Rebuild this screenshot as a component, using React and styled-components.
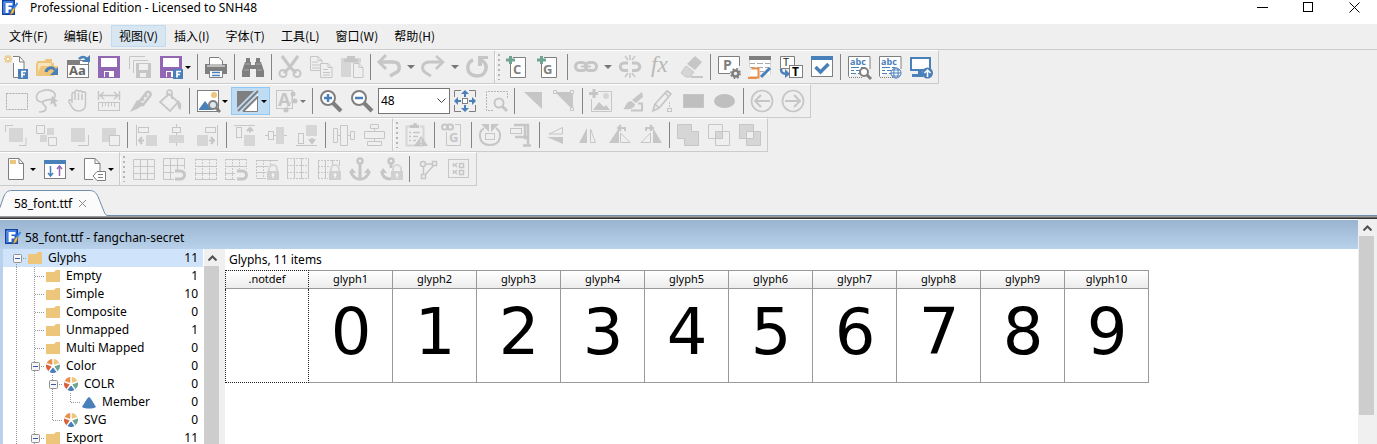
import React from 'react';
import styled, { createGlobalStyle, css } from 'styled-components';

const G = '#c6c6c6';
const L = '#d6d6d6';
const D = '#7f7f7f';
const B = '#4a80ba';
const O = '#edc57b';
const P = '#9166b5';
const T = '#6fa392';
const W = '#ffffff';

const Global = createGlobalStyle`
  * { box-sizing: border-box; }
  html, body { margin: 0; }
  body {
    font-family: "Noto Sans", "Noto Sans CJK SC", sans-serif;
    font-size: 12px;
    line-height: 18px;
    color: #000;
    background: #efefef;
  }
  button { font: inherit; color: inherit; border: 0; background: none; padding: 0; margin: 0; }
`;

const Window = styled.div`
  display: flex;
  flex-direction: column;
  height: 100vh;
  overflow: hidden;
`;
const TitleBar = styled.header`
  display: flex;
  align-items: flex-start;
  height: 24px;
  background: #fff;
  padding-left: 2px;
`;
const TitleText = styled.div`
  flex: 1;
  line-height: 16px;
  padding-left: 12px;
  white-space: nowrap;
`;
const WindowButton = styled.button`
  width: 46px;
  height: 14px;
  display: flex;
  justify-content: center;
`;
const MenuBar = styled.nav`
  display: flex;
  height: 26px;
  padding: 1px 0 2px 1px;
  border-bottom: 1px solid #cbcbcb;
`;
const MenuItem = styled.button`
  padding: 0 7px;
  border: 1px solid ${(p) => (p.$active ? '#c0dcf3' : 'transparent')};
  background: ${(p) => (p.$active ? '#d8e6f2' : 'transparent')};
  font-family: "Noto Sans CJK SC", sans-serif;
  white-space: nowrap;
`;
const ToolRow = styled.div`
  display: flex;
`;
const Toolbar = styled.div`
  display: flex;
  align-items: center;
  height: 34px;
  padding-right: 2px;
  border-top: 1px solid #fff;
  border-right: 1px solid #cbcbcb;
  border-bottom: 1px solid #cbcbcb;
`;
const Grip = styled.i`
  width: 7px;
  height: 26px;
  border-left: 1px solid #fff;
  background: repeating-linear-gradient(#b5b5b5 0 2px, transparent 2px 5px) 2px 0 / 2px 100% no-repeat;
`;
const ToolButton = styled.button`
  display: flex;
  align-items: center;
  width: ${(p) => (p.$drop === 'wide' ? 44 : p.$drop ? 39 : 31)}px;
  height: 28px;
  padding-left: 4px;
  gap: ${(p) => (p.$drop === 'wide' ? 6 : 2)}px;
  flex: none;
  svg { overflow: visible; }
  ${(p) => p.$active && css`
    background: #c0dcf3;
    box-shadow: inset 0 0 0 1px #90c8f6;
  `}
`;
const Caret = styled.i`
  border: solid transparent;
  border-width: ${(p) => (p.$wide ? '4px 4px 0' : '3px 3px 0')};
  border-top-color: ${(p) => p.$color};
`;
const Separator = styled.i`
  width: 1px;
  height: 26px;
  margin: 0 2px 0 3px;
  background: #858585;
`;
const ZoomBox = styled.label`
  display: flex;
  align-items: center;
  height: 26px;
  width: 72px;
  margin: 0 -1px 0 1px;
  position: relative;
  svg { position: absolute; right: 4px; pointer-events: none; }
`;
const ZoomSelect = styled.select`
  appearance: none;
  width: 100%;
  height: 100%;
  border: 1px solid #777;
  border-radius: 0;
  background: #fff;
  color: #000;
  font: 12px "Noto Sans", sans-serif;
  padding: 0 2px 2px;
`;
const TabStrip = styled.div`
  display: flex;
  flex: none;
  height: 33px;
  padding-top: 4px;
  background: linear-gradient(#6e8dab, #6e8dab) 0 29px / 100% 1px no-repeat,
    linear-gradient(#9d9d9d, #9d9d9d) 0 30px / 100% 1px no-repeat,
    linear-gradient(#696969, #696969) 0 31px / 100% 1px no-repeat,
    linear-gradient(#303438, #303438) 0 32px / 100% 1px no-repeat;
`;
const Tab = styled.div`
  position: relative;
  display: flex;
  align-items: center;
  gap: 6px;
  width: 108px;
  height: 26px;
  padding: 2px 0 0 14px;
`;
const TabShape = styled.svg`
  position: absolute;
  inset: 0;
`;
const TabLabel = styled.button`
  position: relative;
  white-space: nowrap;
`;
const Workspace = styled.main`
  display: flex;
  flex: 1;
  min-height: 0;
  padding: 0 2px 0 0;
`;
const Document = styled.section`
  display: flex;
  flex-direction: column;
  flex: 1;
  min-width: 0;
  margin-right: 1px;
  background: #b9d1ea;
  border-top: 1px solid #fff;
`;
const DocTitle = styled.div`
  display: flex;
  align-items: flex-end;
  flex: none;
  gap: 4px;
  height: 29px;
  padding: 0 0 2px 5px;
  background: linear-gradient(#99b4d1, #b9d1ea);
  svg { margin-bottom: 2px; }
`;
const DocBody = styled.div`
  display: flex;
  flex: 1;
  min-height: 0;
  margin-left: 3px;
  background: #fff;
`;
const Tree = styled.ul`
  width: 201px;
  flex: none;
  margin: 0;
  padding: 0 1px 0 0;
  list-style: none;
  overflow: hidden;
`;
const TreeRow = styled.li`
  display: flex;
  align-items: center;
  height: 18px;
  padding: 0 5px;
  background: ${(p) => (p.$selected ? '#cfe4fb' : 'transparent')};
  white-space: nowrap;
  svg { flex: none; }
`;
const TreeIcon = styled.span`
  display: flex;
  width: 22px;
  padding-left: 2px;
`;
const Count = styled.span`
  margin-left: auto;
`;
const ScrollTrack = styled.div`
  display: flex;
  flex-direction: column;
  flex: none;
  width: 16px;
  background: #f0f0f0;
`;
const ScrollArrow = styled.button`
  display: flex;
  align-items: center;
  justify-content: center;
  flex: none;
  height: 17px;
`;
const ScrollRail = styled.div`
  flex: 1;
`;
const Thumb = styled.div`
  height: ${(p) => p.$size};
  margin-right: 1px;
  background: #cdcdcd;
`;
const Splitter = styled.div`
  width: 5px;
  flex: none;
  background: #f0f0f0;
`;
const GlyphPane = styled.div`
  flex: 1;
  min-width: 0;
  overflow: hidden;
`;
const PaneHeading = styled.h1`
  margin: 0;
  padding: 2px 0 1px 4px;
  font-size: 12px;
  font-weight: 400;
  line-height: 18px;
`;
const GlyphTable = styled.table`
  table-layout: fixed;
  width: 924px;
  border-spacing: 0;
  text-align: center;
`;
const edge = css`
  padding: 0;
  border: solid #999;
  border-width: 0 1px 1px 0;
`;
const GlyphName = styled.th`
  ${edge}
  height: 19px;
  border-top-width: 1px;
  padding-bottom: 2px;
  font-size: 11px;
  line-height: 15px;
  font-weight: 400;
  background: linear-gradient(#fff, #ececec);
  ${(p) => p.$current && css`
    border-width: 1px;
    border-style: dotted dotted solid;
    border-color: #222 #222 #999;
  `}
`;
const GlyphCell = styled.td`
  ${edge}
  height: 94px;
  padding: 0 0 8px 1px;
  font-family: "DejaVu Sans", sans-serif;
  font-size: 64px;
  line-height: 80px;
  ${(p) => p.$current && css`
    border: 1px dotted #222;
    border-top: 0;
  `}
`;

const Letter = ({ x, y, s = 10, c = D, w = 700, f = 'Open Sans', i, children }) => (
  <text x={x} y={y} fontSize={s} fill={c} fontWeight={w} fontStyle={i ? 'italic' : 'normal'} fontFamily={`"${f}", sans-serif`} stroke="none">{children}</text>
);
const FBadge = () => (
  <g><rect x="14" y="14" width="10" height="10" fill={B} /><path d="M18 22.500v-6h4M18 19.500h3" stroke={W} strokeWidth="1.700" /></g>
);
const Lock = () => (
  <g><path d="M14 15v-3a4 4 0 0 1 8 0v3" stroke={L} strokeWidth="2" /><rect x="12" y="14" width="12" height="9" fill="#d0d0d0" /><path d="M18 16v5M16.500 18h3" stroke={W} /></g>
);
const Magnet = () => <path d="M13 14h5.500a3.500 3.500 0 0 1 0 8H13" stroke={G} strokeWidth="3" />;
const Floppy = ({ c }) => (
  <g><path fillRule="evenodd" fill={c} d="M1 1h22v22H1zM4 3v9h16V3zM7 16v6h10v-6z" /><path d="M8 17h4v5H8z" fill={c} /></g>
);
const Globe = ({ x, y }) => (
  <g transform={`translate(${x} ${y})`} stroke={B} fill={W}><circle r="5" /><ellipse rx="2.200" ry="5" /><path d="M-5 0H5M-4-3h8M-4 3h8" /></g>
);
const AbcPage = () => (
  <g><path d="M23 14V1.500H1.500v20" stroke={D} fill={W} /><path d="M2 22.500h14" stroke={D} strokeDasharray="1 1" /><Letter x="3" y="10" s="9" c={B}>abc</Letter><path d="M4 12.500h8m2 0h3M4 15.500h3m2 0h4M4 18.500h5m2 0h2" stroke={B} /></g>
);

const icons = {
  newDoc: <><path d="M9.500 8v14.500H20V6.500L15.500 1.500H9" stroke={D} fill={W} /><path d="M15.500 2v5H20" stroke={D} /><path d="M4 0v8M0 4h8M1 1l6 6M7 1L1 7" stroke={O} strokeWidth="1.500" /><circle cx="4" cy="4" r="1.300" fill={W} /><FBadge /></>,
  open: <><path d="M1 21V8h1V6h7l2-2h6v4h2v3H6z" fill={O} /><path d="M3 8h13v3H6l-3 6z" fill="#f7e3bc" /><path d="M6 11h17l-4 10H1z" fill={O} /><path d="M11 17a5 5 0 0 1 9-2" stroke={B} strokeWidth="3" /><path d="M15 20h8v-8z" fill={B} /></>,
  rename: <><rect x="1.500" y="5.500" width="21" height="17" stroke={D} fill={W} /><path d="M1 5h13v4h9v1H1z" fill={D} /><Letter x="3" y="20" s="13" c="#666">Aa</Letter><path d="M13 4a5 5 0 0 1 8 0" stroke={B} strokeWidth="2.500" /><path d="M24 0v7h-8z" fill={B} /></>,
  save: <><path d="M4 2h16v11H4zM7 16h11v6H7z" fill={W} /><Floppy c={P} /></>,
  saveAll: <><path d="M1.500 14V1.500H17M5.500 18V5.500H20" stroke={G} /><path fillRule="evenodd" fill={G} d="M8 8h15v15H8zM11 9v6h9V9zM12 18v4h6v-4z" /></>,
  saveF: <><path d="M4 2h16v11H4zM7 16h11v6H7z" fill={W} /><Floppy c={P} /><FBadge /></>,
  print: <><path d="M1 9h22v10H1z" fill={D} /><path d="M5.500 10V2.500H15l3.500 3.500v4z" stroke={D} fill={W} /><path d="M3 11h18" stroke={W} /><path d="M5.500 15.500h13v7h-13z" stroke={D} fill={W} /><path d="M8 17.500h8M8 20.500h8" stroke={B} strokeWidth="1.500" /></>,
  find: <><path d="M5 3h4v4h1v3h4V7h1V3h4v4h1l3 9v6h-8v-8h-6v8H1v-6l3-9h1z" fill={D} /><path d="M4 9h5M15 9h5M3 15h5M16 15h5" stroke="#aaa" /></>,
  cut: <><path d="M4 1l8 11 8-11M12 12l-6 6M12 12l6 6" stroke={G} strokeWidth="3" /><circle cx="5" cy="18.500" r="3.500" stroke={G} strokeWidth="2" /><circle cx="19" cy="18.500" r="3.500" stroke={G} strokeWidth="2" /></>,
  copy: <><path d="M1.500 1.500H9l4 4v10H1.500zM9 1.500v4h4" stroke={G} /><path d="M3 7h6M3 10h8M3 13h8" stroke={G} /><path d="M11.500 8.500H19l4 4v10H11.500z" stroke={G} fill="#efefef" /><path d="M19 8.500v4h4M14 14.500h5M14 17.500h7M14 20h7" stroke={G} /></>,
  paste: <><path d="M1 3h20v5H11v14H1z" fill={L} /><path d="M7 4V1h8v3h3v3H4V4z" fill={G} /><path d="M13.500 8.500H19l4 4v10h-9.500zM19 8.500v4h4" stroke={G} fill="#efefef" /></>,
  undo: <><path d="M3 7h13c8 0 8 9 2 11l-5 3" stroke={G} strokeWidth="3.500" /><path d="M9 0L2 7l7 7" stroke={G} strokeWidth="3" /></>,
  redo: <><path d="M21 7H9C0 7 0 15 5 18l5 3" stroke={G} strokeWidth="3" /><path d="M15 1l7 6-7 7" stroke={G} strokeWidth="2.500" /></>,
  repeat: <><path d="M16 5c9 5 5 16-4 16C1 21 0 8 8 5" stroke={G} strokeWidth="3.500" /><path d="M13 1h10v3h-6v7h-4z" fill={G} /></>,
  addC: <><path d="M7 2.500h12.500v20h-15V9" stroke={D} fill={W} /><path d="M4.500 1v8M0 5h9" stroke={T} strokeWidth="3" /><Letter x="7" y="19" s="13">C</Letter></>,
  addG: <><path d="M7 2.500h12.500v20h-15V9" stroke={D} fill={W} /><path d="M4.500 1v8M0 5h9" stroke={T} strokeWidth="3" /><Letter x="6" y="19" s="13">G</Letter></>,
  link: <g stroke={G} strokeWidth="3"><rect x="1.500" y="7.500" width="11" height="8" rx="4" /><rect x="11.500" y="7.500" width="11" height="8" rx="4" /><path d="M7 11.500h10" strokeWidth="2" /></g>,
  unlink: <g stroke={G} strokeWidth="3"><path d="M10 8H6a3.700 3.700 0 0 0 0 7.500h4M14 8h4a3.700 3.700 0 0 1 0 7.500h-4" /><path d="M12 0v5M7 1l3 4M17 1l-3 4M12 18v5M7 22l3-4M17 22l-3-4" strokeWidth="1.500" /></g>,
  fx: <Letter x="2" y="17" s="23" c="#b8b8b8" f="Liberation Serif" w={400} i>fx</Letter>,
  eraser: <><path d="M15 1l7 6-7 8-8-6z" fill={G} /><path d="M6 11l8 6-4 5H6l-5-4z" fill={L} stroke={G} /><path d="M11 22h12" stroke={G} strokeWidth="2" /></>,
  params: <><path d="M22.500 11V1.500h-21v17H13" stroke={D} fill={W} /><Letter x="6" y="15" s="14">P</Letter><circle cx="18.500" cy="18.500" r="3" stroke={D} strokeWidth="2.500" /><circle cx="18.500" cy="18.500" r="4.700" stroke={D} strokeWidth="1.500" strokeDasharray="1.900 1.800" /></>,
  tableEdit: <><path d="M1.500 12V1.500h21V20" fill={W} stroke={L} /><path d="M1 1h22v4H1z" fill={D} /><path d="M2 8.500h5m2 0h6m2 0h5M2 12.500h5m2 0h6m2 0h4M12 16.500h4" stroke="#aaa" /><path d="M3.500 13.500h7v9h-9" fill={W} stroke="#e8904b" strokeWidth="2" /><path d="M0 23h9" stroke="#e8904b" strokeWidth="2" /><path d="M13 22l9-9" stroke={B} strokeWidth="3" /></>,
  transform: <><path d="M1.500 1.500h14v12h-14z" fill={W} stroke={D} /><Letter x="4" y="11" s="11" c="#222" w={400}>T</Letter><rect x="10.500" y="10.500" width="13" height="12" fill={W} stroke={D} /><Letter x="13" y="21" s="12" c="#000">T</Letter><path d="M2 14c0 4 2 5 6 5" stroke={B} strokeWidth="2.500" /><path d="M6 14l5 5-5 4z" fill={B} /></>,
  validate: <><rect x="1.500" y="1.500" width="21" height="20" fill={W} stroke={D} /><path d="M1 1h22v4H1z" fill={B} /><path d="M5.500 12l5 5 8-8" stroke={B} strokeWidth="3.500" /></>,
  abcFind: <><AbcPage /><circle cx="17" cy="17" r="4" stroke={D} strokeWidth="2" fill={W} /><path d="M20 20l4 4" stroke={D} strokeWidth="3" /></>,
  abcWeb: <><AbcPage /><Globe x={18} y={18} /></>,
  upload: <><rect x="2" y="3" width="19" height="12" stroke={B} strokeWidth="2" fill={W} /><path d="M9 16h4v3H9zM3 19h11v3H3z" fill={B} /><circle cx="18.500" cy="18" r="5.500" fill={B} /><path d="M18.500 22v-7M15.500 18l3-3 3 3" stroke={W} strokeWidth="1.500" /></>,

  rectSel: <rect x="2.500" y="4.500" width="21" height="16" stroke="#aaa" strokeDasharray="2 1" />,
  lasso: <><path d="M8 13C-1 13 0 4 7 2c7-3 14 1 13 5-1 5-8 3-11 5-4 3 2 4 2 7s-3 4-7 4" stroke={G} strokeWidth="1.700" /><path d="M17 7l6 5-3 1 2 4-2 1-2-4-3 2z" fill={G} /></>,
  hand: <path d="M6 14V5a1.500 1.500 0 0 1 3 0V3a1.500 1.500 0 0 1 3.500 0 1.500 1.500 0 0 1 3.500 1 1.500 1.500 0 0 1 3.500 1.500V15c0 5-3 7-7 7-5 0-6-3-9-8-1-2-1-5 2.500-2M9 5v6M12.500 4v7M16 5v6" stroke={G} strokeWidth="1.500" />,
  measure: <><path d="M1.500 2v9M22.500 2v9M3 6.500h18M7 3L3 6.500 7 10M17 3l4 3.500L17 10" stroke={G} strokeWidth="1.500" /><rect x="1.500" y="13.500" width="21" height="8" stroke={G} /><path d="M5.500 14v4M8.500 14v3M11.500 14v4M14.500 14v3M17.500 14v4" stroke={G} /></>,
  knife: <><path d="M11 13l7-9c2-3 6 0 4 3l-7 9z" stroke={G} strokeWidth="2.500" /><path d="M14 12l5-6" stroke={G} strokeWidth="2" strokeDasharray="3 2" /><path d="M9 11l6 5-6 4-7 3z" fill={G} /></>,
  bucket: <><path d="M10 5l9 8-8 9-10-9zM8 8V4c0-4 5-4 5 0v6" stroke={G} strokeWidth="1.700" /><path d="M19 11c5 4 3 9 2 10-3-3-3-6-2-10z" fill={G} /></>,
  imageFind: <><rect x="1.500" y="1.500" width="21" height="21" fill={W} stroke={D} /><circle cx="18" cy="6" r="3" fill={O} /><path d="M3 20l6-8 4 5 3-3v7H3z" fill={B} /><circle cx="17" cy="16" r="4" fill="#dde7f2" stroke={D} strokeWidth="2" /><path d="M20 19l4 4" stroke={D} strokeWidth="3" /></>,
  overlay: <><path d="M23 5v17.500H8z" fill={W} /><path d="M2 2h17L2 19z" fill={D} /><path d="M3 22L23 2M8 22.500L23 7.500" stroke={D} strokeWidth="2" /><path d="M8 22.500h14.500V7" stroke={D} /></>,
  styleA: <><rect x="2.500" y="1.500" width="16" height="18" stroke={G} /><Letter x="4" y="17" s="18" c={G}>A</Letter><path d="M12 20l6-8v-8M18 12h5" stroke={G} /><circle cx="12" cy="21" r="2.500" fill={G} /><circle cx="19" cy="5" r="2.500" fill={G} /><circle cx="21" cy="12" r="2.500" fill={G} /></>,
  zoomIn: <><circle cx="9" cy="9" r="7" stroke={D} strokeWidth="2" fill={W} /><path d="M14 14l8 8" stroke={D} strokeWidth="4" /><path d="M5 9h8M9 5v8" stroke={B} strokeWidth="2.500" /></>,
  zoomOut: <><circle cx="9" cy="9" r="7" stroke={D} strokeWidth="2" fill={W} /><path d="M14 14l8 8" stroke={D} strokeWidth="4" /><path d="M5 9h8" stroke={B} strokeWidth="2.500" /></>,
  fit: <><path d="M1.500 8V1.500H8M16 1.500h6.500V8M22.500 16v6.500H16M8 22.500H1.500V16" stroke={D} /><rect x="9.500" y="9.500" width="5" height="5" stroke={D} fill={W} /><path d="M12 1l4 4h-3v3h-2V5H8zM12 23l4-4h-3v-3h-2v3H8zM1 12l4-4v3h3v2H5v3zM23 12l-4-4v3h-3v2h3v3z" fill={B} /></>,
  zoomSel: <><path d="M23.500 9V2.500h-21v19H9" stroke="#b5b5b5" strokeDasharray="2 1" /><circle cx="15" cy="14" r="4.500" stroke={G} strokeWidth="2" /><path d="M18 17l5 5" stroke={G} strokeWidth="3" /></>,
  corner: <path d="M3 3h18v17z" fill={G} />,
  cornerNodes: <><path d="M3 3h18v18z" fill={G} /><path d="M1.500 1.500h3v3h-3zM18.500 1.500h3v3h-3zM18.500 18.500h3v3h-3z" stroke={G} fill="#efefef" /></>,
  addImage: <><path d="M9 2.500h13.500v20h-20V10" stroke={G} /><path d="M5 0v9M0 4.500h9" stroke={G} strokeWidth="3" /><circle cx="17" cy="7" r="3" fill={L} /><path d="M4 21l6-8 5 5 2-2 4 5z" fill={G} /></>,
  brush: <><path d="M22 3l1 5-7 6-4-3zM11 12l4 3c0 4-5 6-12 5 3-1 2-7 8-8z" fill={G} /><path d="M11 21.500h11v-7h-4" stroke={G} strokeWidth="2" /></>,
  pencil: <><path d="M4 15L16 2l4 3L8 19l-6 3zM14 4l4 4M4 15l4 4" stroke={G} strokeWidth="1.700" /><path d="M18.500 13v7" stroke={G} strokeDasharray="2 1" /><rect x="16.500" y="19.500" width="4" height="3" stroke={G} /></>,
  rect: <rect x="1.500" y="5.500" width="20" height="13" fill="#bfbfbf" stroke={G} />,
  ellipse: <ellipse cx="11.500" cy="12" rx="10.500" ry="7" fill="#bfbfbf" />,
  back: <g stroke={G} strokeWidth="1.700"><circle cx="12" cy="12" r="10.500" /><path d="M20 12H5M11 6l-6 6 6 6" strokeWidth="2" /></g>,
  forward: <g stroke={G} strokeWidth="1.700"><circle cx="12" cy="12" r="10.500" /><path d="M4 12h15M13 6l6 6-6 6" strokeWidth="2" /></g>,

  toFront: <><rect x="5" y="5" width="14" height="14" fill={L} /><path d="M1.500 9V2.500H9M22 14.500v8h-7" stroke={G} /></>,
  front: <><path d="M12 5h7v7h-7zM5 12h7v7H5z" fill={L} /><path d="M1.500 2.500h8v8h-8zM13.500 14.500h8v8h-8z" stroke={G} /></>,
  backward: <><rect x="5" y="5" width="14" height="14" fill={L} /><path d="M22.500 12v10.500H12" stroke={G} /></>,
  toBack: <><rect x="5" y="5" width="14" height="14" fill={L} /><rect x="12.500" y="12.500" width="10" height="10" stroke={G} fill="#efefef" /></>,
  alignL: <><path d="M2.500 2v21" stroke={G} /><rect x="4.500" y="4.500" width="10" height="5" stroke={G} /><rect x="12" y="12" width="11" height="11" fill={L} /><path d="M10 17.500H5M8 14l-3 3.500L8 21" stroke={G} strokeWidth="2" /></>,
  alignC: <><path d="M11.500 1v22" stroke={G} /><rect x="7.500" y="4.500" width="8" height="5" stroke={G} fill="#efefef" /><rect x="4" y="12" width="15" height="8" fill={L} /></>,
  alignR: <><path d="M21.500 2v21" stroke={G} /><rect x="9.500" y="4.500" width="10" height="5" stroke={G} /><rect x="1" y="12" width="11" height="11" fill={L} /><path d="M13 17.500h5M15 14l3 3.500-3 3.500" stroke={G} strokeWidth="2" /></>,
  alignT: <><path d="M1 2.500h21" stroke={G} /><rect x="3.500" y="4.500" width="5" height="10" stroke={G} /><rect x="11" y="12" width="11" height="11" fill={L} /><path d="M17 9.500V5M14 8l3-3 3 3" stroke={G} strokeWidth="2" /></>,
  alignM: <><path d="M1 12.500h22" stroke={G} /><rect x="4.500" y="8.500" width="5" height="8" stroke={G} fill="#efefef" /><rect x="12" y="4" width="8" height="17" fill={L} /></>,
  alignB: <><path d="M1 22.500h21" stroke={G} /><rect x="3.500" y="10.500" width="5" height="10" stroke={G} /><rect x="11" y="2" width="11" height="11" fill={L} /><path d="M17 15v5M14 16l3 4 3-4" stroke={G} strokeWidth="2" /></>,
  distH: <g stroke={G}><path d="M1.500 5.500h4v14h-4zM8.500 2.500h7v20h-7zM18.500 8.500h4v8h-4zM5.500 12.500h3m7 0h3" /></g>,
  distV: <g stroke={G}><path d="M7.500 1.500h8v4h-8zM1.500 8.500h20v7h-20zM4.500 18.500h14v4h-14zM11.500 5.500v3m0 7v3" /></g>,
  pasteWarn: <><path d="M6 3.500H2.500v19h17v-19H16" stroke={L} strokeWidth="2" /><path d="M6 5V2h3a2 2 0 0 1 4 0h2v3z" fill={G} /><path d="M5 9.500h2m2 0h7M5 13.500h2m2 0h5M5 17.500h2m2 0h3" stroke={G} strokeWidth="1.500" /><path d="M17 13l7 10H10z" fill={G} /><path d="M17 16v4m0 1v1" stroke="#efefef" /></>,
  linkG: <><path d="M14 1.500h5.500v21H5.500V9" stroke={G} /><rect x="1" y="1.500" width="6" height="5" rx="2.500" stroke={G} strokeWidth="2" /><rect x="6" y="1.500" width="6" height="5" rx="2.500" stroke={G} strokeWidth="2" /><Letter x="8" y="19" s="13" c={G}>G</Letter></>,
  rotate: <><path d="M6 5c-7 5-5 17 6 17s13-12 6-17" stroke={G} strokeWidth="2" /><path d="M3 1h8v8zM21 1h-8v8z" fill={G} /><rect x="7.500" y="10.500" width="9" height="6" stroke={G} /></>,
  clamp: <><path d="M5 2h14v20M16 2v13h3M6 14h12M14 22.500h8" stroke={G} strokeWidth="2.500" /><rect x="1.500" y="5.500" width="11" height="5" stroke={G} fill="#efefef" /></>,
  flipV: <><path d="M3 11L16.500 4.500v6.500z" stroke={G} /><path d="M1 14h16v7z" fill={G} /></>,
  flipH: <><path d="M10 5v15H2z" fill={G} /><path d="M13.500 6v13.500h5z" stroke={G} /></>,
  rotL: <><path d="M11 5v15H1z" fill={G} /><path d="M12.500 10v9.500H22z" stroke={G} /><path d="M17 8V5h-6M13 2l-3 3 3 3" stroke={G} strokeWidth="2" /></>,
  rotR: <><path d="M14 5v15h9z" fill={G} /><path d="M11.500 10v9.500H2z" stroke={G} /><path d="M7 8V5h6M11 2l3 3-3 3" stroke={G} strokeWidth="2" /></>,
  union: <path d="M1.500 1.500h14v7h7v14h-14v-7h-7z" fill={L} stroke={G} />,
  intersect: <><path d="M8 8h8v8H8z" fill={L} /><path d="M1.500 1.500h14v14h-14zM8.500 8.500h14v14h-14z" stroke={G} /></>,
  exclude: <path d="M1.500 1.500h14v14h-14zM8.500 8.500h14v14h-14z" fillRule="evenodd" fill={L} stroke={G} />,

  page: <><path d="M4.500 1.500H15l4.500 5v16h-15z" fill={W} stroke={D} /><path d="M15 1.500v5h4.500" stroke={D} /><path d="M6 3h6v4H6z" fill={O} /></>,
  sort: <><rect x="1.500" y="3.500" width="21" height="18" fill={W} stroke={D} /><path d="M1 3h22v4H1z" fill={B} /><path d="M7.500 9v10M5 16l2.500 3 2.500-3" stroke={B} strokeWidth="1.500" /><path d="M16.500 19V9M14 12l2.500-3 2.500 3" stroke={P} strokeWidth="1.500" /></>,
  tag: <><path d="M11 22.500H2.500v-21H13l5 5V14" fill={W} stroke={D} /><path d="M13 1.500v5h5" stroke={D} /><path d="M11 19l4-4.500h8.500v9H15z" fill={W} stroke={D} /><path d="M16 17.500h5M16 20.500h5" stroke={D} /></>,
  grid: <path d="M2.500 2.500h21v20h-21zM9.500 2v21M16.500 2v21M2 9.500h22M2 16.500h22" stroke={G} />,
  gridSnap: <><path d="M12 22.500H1.500v-21h21V12M8.500 1v21M15.500 1v12M1 8.500h22M1 15.500h11" stroke={G} /><Magnet /></>,
  rows: <><path d="M2 2.500h22M2 9.500h22M2 16.500h22M2 22.500h22" stroke={G} /><path d="M2.500 2v21M9.500 2v21M16.500 2v21M23.500 2v21" stroke={G} strokeDasharray="2 1" /></>,
  rowsSnap: <><path d="M1 2.500h22M1 9.500h22M1 16.500h10M1 22.500h10" stroke={G} /><path d="M1.500 2v21M8.500 2v21M15.500 2v10M22.500 2v10" stroke={G} strokeDasharray="2 1" /><Magnet /></>,
  rowsLock: <><path d="M1 3.500h22M1 9.500h12M1 15.500h10M1 21.500h10" stroke={G} /><path d="M1.500 3v19M8.500 3v19M15.500 3v5" stroke={G} strokeDasharray="2 1" /><Lock /></>,
  cols: <><path d="M1.500 1v21M8.500 1v21M15.500 1v21M22.500 1v21" stroke={G} /><path d="M1 1.500h22M1 8.500h22M1 15.500h22M1 21.500h22" stroke={G} strokeDasharray="2 1" /></>,
  colsLock: <><path d="M1.500 3v19M8.500 3v19M15.500 3v6M22.500 3v6" stroke={G} /><path d="M1 3.500h22M1 9.500h12M1 15.500h10M1 21.500h10" stroke={G} strokeDasharray="2 1" /><Lock /></>,
  anchor: <g stroke={G} strokeWidth="3"><circle cx="12" cy="4" r="2.500" strokeWidth="2.500" /><path d="M12 7v15M3 14c1 11 17 11 18 0" /><path d="M1 16l3-5 4 5zM23 16l-3-5-4 5z" fill={G} stroke="none" /></g>,
  anchorLock: <><g stroke={G} strokeWidth="3"><circle cx="12" cy="4" r="2.500" strokeWidth="2.500" /><path d="M12 7v4M12 22C6 22 3 19 3 14" /><path d="M1 16l3-5 4 5z" fill={G} stroke="none" /></g><Lock /></>,
  path: <g stroke={G} strokeWidth="1.500"><circle cx="7" cy="7" r="2.500" /><rect x="16.500" y="4.500" width="4" height="4" /><rect x="5.500" y="17.500" width="4" height="4" /><path d="M9.500 7h7M7.500 10v7M9.500 17.500l8-9" /></g>,
  classes: <g stroke={G}><rect x="1.500" y="2.500" width="20" height="18" /><path d="M6.500 6v4M10 6L8 8l2 2M12.500 6.500h4v4h-4zM6.500 13v4M10 13l-2 2 2 2M12.500 13.500h4v4h-4z" strokeWidth="1.500" /></g>,
};

const Icon = ({ name }) => (
  <svg width="24" height="24" viewBox="0 0 24 24" fill="none" aria-hidden="true">{icons[name]}</svg>
);

const rows = [
  [
    ['newDoc', 'open', 'rename', 'save', 'saveAll', 'saveF:drop', '|', 'print', '|', 'find', '|', 'cut', 'copy', 'paste', '|', 'undo:wide', 'redo:wide', 'repeat'],
    ['addC', 'addG', '|', 'link:wide', 'unlink', 'fx', 'eraser', '|', 'params', 'tableEdit', 'transform', 'validate', '|', 'abcFind', 'abcWeb', 'upload'],
  ],
  [
    ['rectSel', 'lasso', 'hand', 'measure', 'knife', 'bucket', '|', 'imageFind:drop', 'overlay:drop:active', 'styleA:drop:gray', '|', 'zoomIn', 'zoomOut', 'ZOOM', 'fit', 'zoomSel', '|', 'corner', 'cornerNodes', '|', 'addImage', 'brush', 'pencil', 'rect', 'ellipse', '|', 'back', 'forward'],
  ],
  [
    ['toFront', 'front', 'backward', 'toBack', '|', 'alignL', 'alignC', 'alignR', '|', 'alignT', 'alignM', 'alignB', '|', 'distH', 'distV'],
    ['pasteWarn', '|', 'linkG', '|', 'rotate', 'clamp', '|', 'flipV', 'flipH', 'rotL', 'rotR', '|', 'union', 'intersect', 'exclude'],
  ],
  [
    ['page:drop', 'sort:drop', 'tag:drop'],
    ['grid', 'gridSnap', 'rows', 'rowsSnap', 'rowsLock', 'cols', 'colsLock', 'anchor', 'anchorLock', '|', 'path', 'classes'],
  ],
];

function Tool({ spec }) {
  if (spec === '|') return <Separator />;
  if (spec === 'ZOOM') {
    return (
      <ZoomBox>
        <ZoomSelect aria-label="Zoom" defaultValue="48"><option>48</option></ZoomSelect>
        <svg width="9" height="6" viewBox="0 0 9 6" fill="none"><path d="M.5.5l4 4 4-4" stroke="#444" /></svg>
      </ZoomBox>
    );
  }
  const [name, drop, state] = spec.split(':');
  return (
    <ToolButton aria-label={name} $drop={drop} $active={state === 'active'}>
      <Icon name={name} />
      {drop && <Caret $wide={drop === 'wide'} $color={drop === 'wide' || state === 'gray' ? '#777' : '#000'} />}
    </ToolButton>
  );
}

const AppLogo = () => (
  <svg width="16" height="16" viewBox="0 0 16 16" fill="none" aria-hidden="true">
    <rect x=".5" y=".5" width="12" height="14" fill="#1f5fd0" stroke="#173f9a" />
    <path d="M2 13.500V2h9" stroke="#6fa4ee" />
    <path d="M3.500 3h7v2.500h-4V7h3v2.500h-3V13h-3z" fill="#fff" />
    <path d="M15.500 3L11 9.500" stroke="#3d8ae8" strokeWidth="2" />
    <path d="M13 8.500l-1.500 4.500L8 15l1.500-4.500 2-2.500z" fill="#f0c050" stroke="#7a6030" strokeWidth=".5" />
  </svg>
);

const treeArt = {
  folder: <path d="M0 3h8l2-2h4v12H0z" fill={O} />,
  color: (
    <g>
      <path d="M7 7L7 0A7 7 0 0 0 .4 4.800z" fill="#e8904b" />
      <path d="M7 7L7 0a7 7 0 0 1 6.600 4.800z" fill={O} />
      <path d="M7 7l6.600-2.200a7 7 0 0 1-2.500 7.800z" fill={T} />
      <path d="M7 7l4.100 5.600a7 7 0 0 1-8.200 0z" fill={B} />
      <path d="M7 7l-4.100 5.600A7 7 0 0 1 .4 4.800z" fill="#d9603f" />
      <path d="M7 7V0M7 7l6.600-2.200M7 7l4.100 5.600M7 7l-4.100 5.600M7 7L.4 4.800" stroke="#fff" strokeWidth="1.500" />
      <circle cx="7" cy="7" r="1.500" fill="#fff" />
    </g>
  ),
  member: <path d="M7 2c2 1 5 7 7 10-3 2-11 2-14 0 2-3 5-9 7-10z" fill={B} />,
};

const guides = {
  l: <path d="M8.500 0v18" />,
  t: <path d="M8.500 0v18M9 9.500h9" />,
  e: <path d="M8.500 0v9M9 9.500h9" />,
  x: <path d="M8.500 0v18M9 9.500h9" />,
  r: <path d="M8.500 9v9M9 9.500h9" />,
};
const Guide = ({ kind }) => (
  <svg width="18" height="18" viewBox="0 0 18 18" fill="none" aria-hidden="true">
    <g stroke="#999" strokeDasharray="1 1">{guides[kind]}</g>
    {(kind === 'x' || kind === 'r') && (
      <><rect x="5.500" y="5.500" width="8" height="8" rx="1" fill="#f6f6f6" stroke="#919191" /><path d="M7 9.500h5" stroke="#3a58a8" /></>
    )}
  </svg>
);

const tree = [
  ['r', 'folder', 'Glyphs', 11],
  ['lt', 'folder', 'Empty', 1],
  ['lt', 'folder', 'Simple', 10],
  ['lt', 'folder', 'Composite', 0],
  ['lt', 'folder', 'Unmapped', 1],
  ['lt', 'folder', 'Multi Mapped', 0],
  ['lx', 'color', 'Color', 0],
  ['llx', 'color', 'COLR', 0],
  ['llle', 'member', 'Member', 0],
  ['lle', 'color', 'SVG', 0],
  ['lx', 'folder', 'Export', 11],
];

const UpArrow = () => (
  <svg width="9" height="6" viewBox="0 0 9 6" fill="none" aria-hidden="true"><path d="M.5 5.500l4-4 4 4" stroke="#505050" strokeWidth="2" /></svg>
);

const menus = ['文件(F)', '编辑(E)', '视图(V)', '插入(I)', '字体(T)', '工具(L)', '窗口(W)', '帮助(H)'];
const glyphs = ['.notdef', ...Array.from({ length: 10 }, (_, i) => `glyph${i + 1}`)];

export default function App() {
  return (
    <Window>
      <Global />
      <TitleBar>
        <AppLogo />
        <TitleText>Professional Edition - Licensed to SNH48</TitleText>
        <WindowButton aria-label="Minimize"><svg width="11" height="14"><path d="M0 7.500h11" stroke="#000" /></svg></WindowButton>
        <WindowButton aria-label="Maximize"><svg width="11" height="14"><rect x=".5" y="2.500" width="9" height="9" fill="none" stroke="#000" /></svg></WindowButton>
        <WindowButton aria-label="Close"><svg width="11" height="14"><path d="M.5 2.500l10 10M10.500 2.500l-10 10" stroke="#000" /></svg></WindowButton>
      </TitleBar>
      <MenuBar>
        {menus.map((m, i) => <MenuItem key={m} $active={i === 2}>{m}</MenuItem>)}
      </MenuBar>
      {rows.map((bars, r) => (
        <ToolRow key={r}>
          {bars.map((tools, b) => (
            <Toolbar key={b} role="toolbar">
              {b > 0 && <Grip />}
              {tools.map((spec, i) => <Tool key={i} spec={spec} />)}
            </Toolbar>
          ))}
        </ToolRow>
      ))}
      <TabStrip>
        <Tab>
          <TabShape width="108" height="26" viewBox="0 0 108 26">
            <path d="M-1 26V20L4 6C6 2 8 .5 12 .5H89c5 0 7 2 9 6l6 15c1 3 2 4 4 4v1z" fill="#fbfbfb" />
            <path d="M-1 20L4 6C6 2 8 .5 12 .5H89c5 0 7 2 9 6l6 15c1 3 2 4 4 4" fill="none" stroke="#6e8dab" />
          </TabShape>
          <TabLabel>58_font.ttf</TabLabel>
          <TabLabel aria-label="Close tab"><svg width="9" height="9"><path d="M1 1l7 7M8 1L1 8" stroke="#888" /></svg></TabLabel>
        </Tab>
      </TabStrip>
      <Workspace>
        <Document>
          <DocTitle><AppLogo />58_font.ttf - fangchan-secret</DocTitle>
          <DocBody>
            <Tree>
              {tree.map(([lines, icon, name, count], i) => (
                <TreeRow key={name} $selected={i === 0}>
                  {lines.split('').map((k, j) => <Guide key={j} kind={k} />)}
                  <TreeIcon><svg width="15" height="14" viewBox="0 0 15 14">{treeArt[icon]}</svg></TreeIcon>
                  {name}
                  <Count>{count}</Count>
                </TreeRow>
              ))}
            </Tree>
            <ScrollTrack>
              <ScrollArrow aria-label="Scroll up"><UpArrow /></ScrollArrow>
              <ScrollRail><Thumb $size="100%" /></ScrollRail>
            </ScrollTrack>
            <Splitter />
            <GlyphPane>
              <PaneHeading>Glyphs, 11 items</PaneHeading>
              <GlyphTable>
                <thead>
                  <tr>{glyphs.map((g, i) => <GlyphName key={g} $current={i === 0}>{g}</GlyphName>)}</tr>
                </thead>
                <tbody>
                  <tr>{glyphs.map((g, i) => <GlyphCell key={g} $current={i === 0}>{i > 0 ? i - 1 : ''}</GlyphCell>)}</tr>
                </tbody>
              </GlyphTable>
            </GlyphPane>
          </DocBody>
        </Document>
        <ScrollTrack>
          <ScrollArrow aria-label="Scroll up"><UpArrow /></ScrollArrow>
          <ScrollRail><Thumb $size="86%" /></ScrollRail>
        </ScrollTrack>
      </Workspace>
    </Window>
  );
}
